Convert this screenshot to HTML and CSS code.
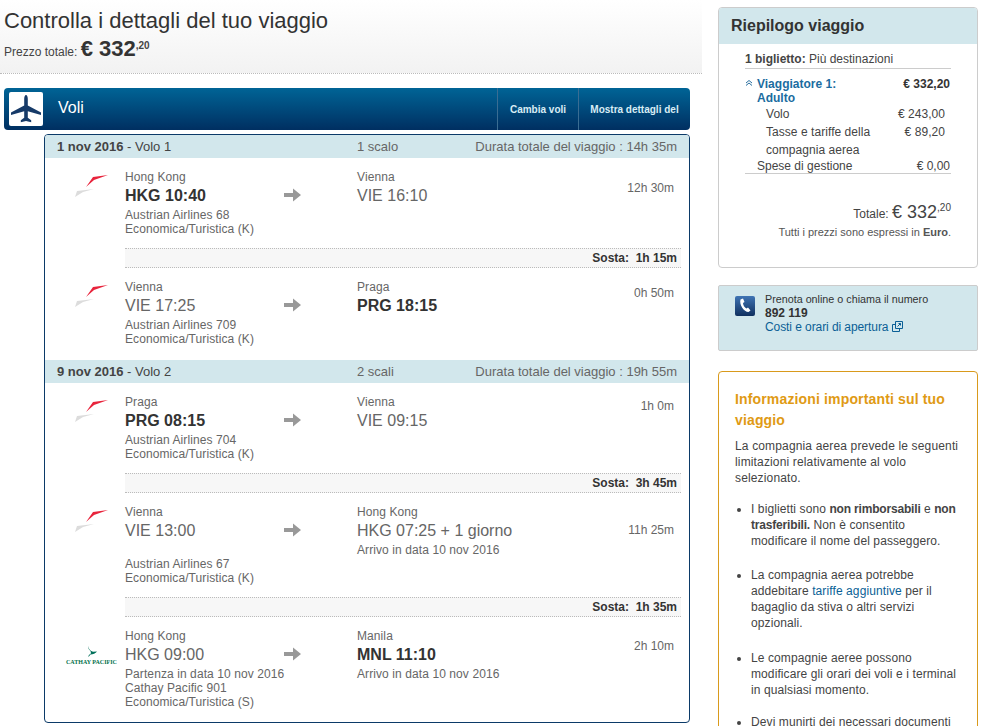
FILE: index.html
```html
<!DOCTYPE html>
<html lang="it">
<head>
<meta charset="utf-8">
<title>Controlla i dettagli del tuo viaggio</title>
<link rel="stylesheet" href="styles.css">
</head>
<body>
<div class="page">
  <main class="main">
    <header class="head">
      <h1>Controlla i dettagli del tuo viaggio</h1>
      <p class="total">Prezzo totale: <b class="amount">€ 332</b><sup class="cents">,20</sup></p>
    </header>
    <div class="bar">
      <span class="plane"><svg width="34" height="34" viewBox="0 0 34 34"><path fill="#163a68" d="M17 3c1.100 0 1.800 1.800 1.800 4v6.500l13.200 7v2.500l-13.200-3.800v6.500l3.400 2.600v2l-5.200-1.400-5.200 1.400v-2l3.400-2.600v-6.500l-13.200 3.800v-2.500l13.200-7v-6.500c0-2.200.7-4 1.800-4z"/></svg></span>
      <span class="bar-title">Voli</span>
      <a class="bar-btn btn-a">Cambia voli</a>
      <a class="bar-btn btn-b">Mostra dettagli del</a>
    </div>
    <section class="card">
      <div class="fl-head"><span class="fh-a"><b>1 nov 2016</b> - Volo 1</span><span class="fh-b">1 scalo</span><span class="fh-c">Durata totale del viaggio : 14h 35m</span></div>
      <div class="seg h90">
        <div class="logo"><svg class="os" width="36" height="26" viewBox="0 0 36 26"><path fill="#e8243c" d="M33 3 18 5 11 15 19 8z"/><path fill="#dcdcdc" d="M19 17 2 19 0 25 8 20z"/></svg></div>
        <div class="col"><div class="city">Hong Kong</div><div class="time strong">HKG 10:40</div><div class="sub">Austrian Airlines 68</div><div class="sub">Economica/Turistica (K)</div></div>
        <div class="arrow"><svg width="17" height="14" viewBox="0 0 17 14"><path fill="#999" d="M0 5h9V0.500L17 7l-8 6.500V9H0z"/></svg></div>
        <div class="col"><div class="city">Vienna</div><div class="time">VIE 16:10</div></div>
        <div class="dur d30">12h 30m</div>
      </div>
      <div class="stop"><b>Sosta:&nbsp; 1h 15m</b></div>
      <div class="seg h92">
        <div class="logo"><svg class="os" width="36" height="26" viewBox="0 0 36 26"><path fill="#e8243c" d="M33 3 18 5 11 15 19 8z"/><path fill="#dcdcdc" d="M19 17 2 19 0 25 8 20z"/></svg></div>
        <div class="col"><div class="city">Vienna</div><div class="time">VIE 17:25</div><div class="sub">Austrian Airlines 709</div><div class="sub">Economica/Turistica (K)</div></div>
        <div class="arrow"><svg width="17" height="14" viewBox="0 0 17 14"><path fill="#999" d="M0 5h9V0.500L17 7l-8 6.500V9H0z"/></svg></div>
        <div class="col"><div class="city">Praga</div><div class="time strong">PRG 18:15</div></div>
        <div class="dur d25">0h 50m</div>
      </div>
      <div class="fl-head"><span class="fh-a"><b>9 nov 2016</b> - Volo 2</span><span class="fh-b">2 scali</span><span class="fh-c">Durata totale del viaggio : 19h 55m</span></div>
      <div class="seg h90">
        <div class="logo"><svg class="os" width="36" height="26" viewBox="0 0 36 26"><path fill="#e8243c" d="M33 3 18 5 11 15 19 8z"/><path fill="#dcdcdc" d="M19 17 2 19 0 25 8 20z"/></svg></div>
        <div class="col"><div class="city">Praga</div><div class="time strong">PRG 08:15</div><div class="sub">Austrian Airlines 704</div><div class="sub">Economica/Turistica (K)</div></div>
        <div class="arrow"><svg width="17" height="14" viewBox="0 0 17 14"><path fill="#999" d="M0 5h9V0.500L17 7l-8 6.500V9H0z"/></svg></div>
        <div class="col"><div class="city">Vienna</div><div class="time">VIE 09:15</div></div>
        <div class="dur d23">1h 0m</div>
      </div>
      <div class="stop"><b>Sosta:&nbsp; 3h 45m</b></div>
      <div class="seg h104">
        <div class="logo"><svg class="os" width="36" height="26" viewBox="0 0 36 26"><path fill="#e8243c" d="M33 3 18 5 11 15 19 8z"/><path fill="#dcdcdc" d="M19 17 2 19 0 25 8 20z"/></svg></div>
        <div class="col"><div class="city">Vienna</div><div class="time">VIE 13:00</div><div class="sub gap">Austrian Airlines 67</div><div class="sub">Economica/Turistica (K)</div></div>
        <div class="arrow"><svg width="17" height="14" viewBox="0 0 17 14"><path fill="#999" d="M0 5h9V0.500L17 7l-8 6.500V9H0z"/></svg></div>
        <div class="col"><div class="city">Hong Kong</div><div class="time">HKG 07:25 + 1 giorno</div><div class="sub">Arrivo in data 10 nov 2016</div></div>
        <div class="dur d37">11h 25m</div>
      </div>
      <div class="stop"><b>Sosta:&nbsp; 1h 35m</b></div>
      <div class="seg">
        <div class="logo cx"><svg class="cx-mark" width="10" height="12" viewBox="0 0 10 12"><path fill="#00705a" d="M1 0c.5 3 2.500 5 5 5.800L10 5.500C8.500 7.500 6 8.500 3.500 8.500L1.500 11c-.2-1.500.4-2.300 2-3C4.500 6.500 3.500 5 2.500 4 1.500 3 1 1.500 1 0z"/></svg><span class="cx-name">CATHAY PACIFIC</span></div>
        <div class="col"><div class="city">Hong Kong</div><div class="time">HKG 09:00</div><div class="sub">Partenza in data 10 nov 2016</div><div class="sub">Cathay Pacific 901</div><div class="sub">Economica/Turistica (S)</div></div>
        <div class="arrow"><svg width="17" height="14" viewBox="0 0 17 14"><path fill="#999" d="M0 5h9V0.500L17 7l-8 6.500V9H0z"/></svg></div>
        <div class="col"><div class="city">Manila</div><div class="time strong">MNL 11:10</div><div class="sub">Arrivo in data 10 nov 2016</div></div>
        <div class="dur d29">2h 10m</div>
      </div>
    </section>
  </main>
  <aside class="side">
    <section class="summary">
      <h2>Riepilogo viaggio</h2>
      <div class="sum-body">
        <div class="tickets"><b>1 biglietto:</b> Più destinazioni</div>
        <div class="traveller"><span class="chev"><svg width="8" height="6" viewBox="0 0 8 6"><path fill="none" stroke="#2b6f9f" d="M1 3l3-2.500 3 2.500M1 5.500l3-2.500 3 2.500"/></svg></span><b class="tname">Viaggiatore 1: Adulto</b><b class="tprice">€ 332,20</b></div>
        <div class="line"><span>Volo</span><span>€ 243,00</span></div>
        <div class="line tall"><span>Tasse e tariffe della compagnia aerea</span><span>€ 89,20</span></div>
        <div class="fee"><span>Spese di gestione</span><span>€ 0,00</span></div>
        <div class="sum-total">Totale: <span class="big">€ 332</span><sup class="tiny">,20</sup></div>
        <div class="note">Tutti i prezzi sono espressi in <b>Euro</b>.</div>
      </div>
    </section>
    <section class="call">
      <span class="phone"><svg width="20" height="20" viewBox="0 0 20 20"><defs><linearGradient id="pg" x1="0" y1="0" x2="0" y2="1"><stop offset="0" stop-color="#3f74b4"/><stop offset="1" stop-color="#10305f"/></linearGradient></defs><rect width="20" height="20" rx="2" fill="url(#pg)"/><path fill="#fff" d="M5.500 3.500l2.500-1 1.500 3.500-1.500 1c0 2 1.500 4.500 3.500 5.500l1.500-1 2.500 3-2 1.500C9 16 4 9 5.500 3.500z"/></svg></span>
      <div class="call-text">
        <div class="call-lead">Prenota online o chiama il numero</div>
        <div class="num">892 119</div>
        <a class="call-link">Costi e orari di apertura <svg class="ext" width="11" height="11" viewBox="0 0 11 11"><path fill="none" stroke="#0a5f96" d="M3.500.5h7v7h-7zM.5 3.500h3M.5 3.500v7h7v-3"/><path fill="none" stroke="#0a5f96" d="M5.500 5.500l3-3M6.500 2.500h2v2"/></svg></a>
      </div>
    </section>
    <section class="info">
      <h3>Informazioni importanti sul tuo viaggio</h3>
      <p>La compagnia aerea prevede le seguenti limitazioni relativamente al volo selezionato.</p>
      <ul>
        <li>I biglietti sono <b>non rimborsabili</b> e <b>non trasferibili.</b> Non è consentito modificare il nome del passeggero.</li>
        <li>La compagnia aerea potrebbe addebitare <a>tariffe aggiuntive</a> per il bagaglio da stiva o altri servizi opzionali.</li>
        <li>Le compagnie aeree possono modificare gli orari dei voli e i terminal in qualsiasi momento.</li>
        <li>Devi munirti dei necessari documenti</li>
      </ul>
    </section>
  </aside>
</div>
</body>
</html>
```
FILE: styles.css
```css
html, body { margin: 0; padding: 0; height: 726px; overflow: hidden; background: #fff; }
body { font-family: "Liberation Sans", Arial, sans-serif; font-size: 12px; color: #333; }
.page { display: flex; align-items: flex-start; }
.main { width: 702px; flex: none; }
.head { height: 73px; padding: 0 0 0 4px; background: linear-gradient(#fff, #f2f2f2); border-bottom: 1px dotted #bbb; overflow: hidden; }
h1 { margin: 0; padding-top: 8px; font-size: 22px; line-height: 26px; font-weight: normal; color: #333; }
.total { margin: 3px 0 0; line-height: 24px; color: #444; white-space: nowrap; }
.amount { font-size: 22px; color: #333; }
.cents { font-size: 10px; font-weight: bold; vertical-align: 7px; line-height: 0; }
.bar { height: 42px; margin: 14px 12px 0 4px; border-radius: 4px; background: linear-gradient(#006496, #002f61); display: flex; align-items: stretch; color: #fff; }
.plane { width: 34px; height: 34px; margin: 4px 0 0 5px; background: #fff; border-radius: 2px; display: block; }
.bar-title { margin-left: 15px; font-size: 16px; line-height: 39px; flex: 1; }
.bar-btn { border-left: 1px solid #3a6d93; font-size: 10px; font-weight: bold; color: #d8edf5; line-height: 43px; text-align: center; }
.btn-a { width: 80px; }
.btn-b { width: 111px; }
.card { margin: 4px 12px 0 44px; border: 1px solid #0b3a68; border-radius: 4px; height: 587px; overflow: hidden; }
.fl-head { height: 22px; padding-top: 1px; line-height: 22px; background: #d2e7ec; display: flex; color: #666; font-size: 13px; }
.fh-a { width: 300px; padding-left: 12px; box-sizing: border-box; color: #444; }
.fh-b { width: 100px; padding-left: 12px; }
.fh-c { flex: 1; text-align: right; padding-right: 12px; }
.seg { display: grid; grid-template-columns: 80px 159px 73px 1fr 90px; padding-top: 10px; box-sizing: border-box; }
.h90 { height: 90px; }
.h92 { height: 92px; }
.h104 { height: 104px; }
.logo { display: flex; flex-direction: column; align-items: flex-start; }
.os { margin: 4px 0 0 30px; }
.cx { padding-top: 19px; }
.cx-mark { margin: 0 0 1px 42px; display: block; }
.cx-name { font-family: "Liberation Serif", serif; font-size: 6px; font-weight: bold; color: #00704a; white-space: nowrap; margin-left: 21px; line-height: 7px; }
.city { line-height: 18px; color: #666; letter-spacing: .09px; }
.time { font-size: 16px; line-height: 20px; color: #666; white-space: nowrap; }
.strong { font-weight: bold; color: #333; }
.sub { line-height: 14px; color: #666; white-space: nowrap; letter-spacing: .09px; }
.time + .sub { margin-top: 2px; }
.time + .gap { margin-top: 16px; }
.arrow { padding-top: 20px; }
.dur { text-align: right; padding-right: 15px; color: #666; line-height: 14px; }
.d30 { padding-top: 13px; }
.d25 { padding-top: 8px; }
.d23 { padding-top: 6px; }
.d37 { padding-top: 20px; }
.d29 { padding-top: 12px; }
.stop { height: 18px; line-height: 18px; margin: 0 8px 0 80px; border-top: 1px dotted #bbb; border-bottom: 1px dotted #bbb; background: #f7f7f7; text-align: right; padding-right: 4px; }
.side { width: 260px; flex: none; margin-left: 16px; padding-top: 7px; }
.summary { border: 1px solid #ccc; border-radius: 4px; height: 261px; box-sizing: border-box; overflow: hidden; }
h2 { margin: 0; background: #d2e7ec; font-size: 16px; line-height: 36px; height: 36px; padding-left: 12px; color: #333; font-weight: bold; }
.sum-body { padding: 8px 26px 0 26px; }
.tickets { line-height: 14px; padding-bottom: 2px; border-bottom: 1px solid #ccc; color: #444; }
.traveller { display: grid; grid-template-columns: 12px 1fr auto; margin-top: 8px; line-height: 14px; padding-right: 1px; }
.chev { padding-top: 3px; }
.chev svg { display: block; }
.tname { color: #1b6ca0; width: 90px; }
.tprice { color: #333; }
.line { display: flex; justify-content: space-between; padding: 0 6px 0 21px; line-height: 18px; color: #444; letter-spacing: .05px; }
.line.tall span:first-child { width: 125px; }
.fee { display: flex; justify-content: space-between; padding: 0 1px 0 12px; line-height: 14px; border-bottom: 1px solid #ccc; color: #444; }
.sum-total { text-align: right; margin-top: 26px; color: #444; line-height: 24px; }
.big { font-size: 18px; }
.tiny { font-size: 10px; vertical-align: 7px; line-height: 0; }
.note { text-align: right; font-size: 11px; margin-top: -2px; color: #555; line-height: 16px; }
.call { margin-top: 17px; height: 66px; box-sizing: border-box; border: 1px solid #ccc; border-radius: 2px; background: #d2e7ec; display: flex; padding: 6px 0 0 16px; }
.phone { width: 20px; height: 20px; display: block; margin-top: 4px; }
.phone svg { display: block; }
.call-text { margin-left: 10px; line-height: 14px; color: #333; }
.call-lead { font-size: 10.75px; }
.num { font-size: 12px; font-weight: bold; }
.call-link { color: #0a5f96; font-size: 12px; letter-spacing: -.08px; }
.ext { vertical-align: -1px; }
.info { margin-top: 20px; border: 1px solid #d99a1c; border-radius: 4px; padding: 17px 16px 0; height: 420px; box-sizing: border-box; letter-spacing: .15px; }
h3 { margin: 0; font-size: 14px; line-height: 21px; color: #e09a14; font-weight: bold; }
.info p { margin: 7px 0 0; line-height: 16px; color: #444; }
.info ul { margin: 15px 0 0; padding: 0 0 0 16px; }
.info li { line-height: 16px; margin-bottom: 18px; color: #444; letter-spacing: .1px; }
.info li:nth-child(2) { margin-bottom: 19px; }
.info li:nth-child(3) { margin-bottom: 16px; }
.info b { letter-spacing: -.18px; }
.info a { color: #0a5f96; }
```
